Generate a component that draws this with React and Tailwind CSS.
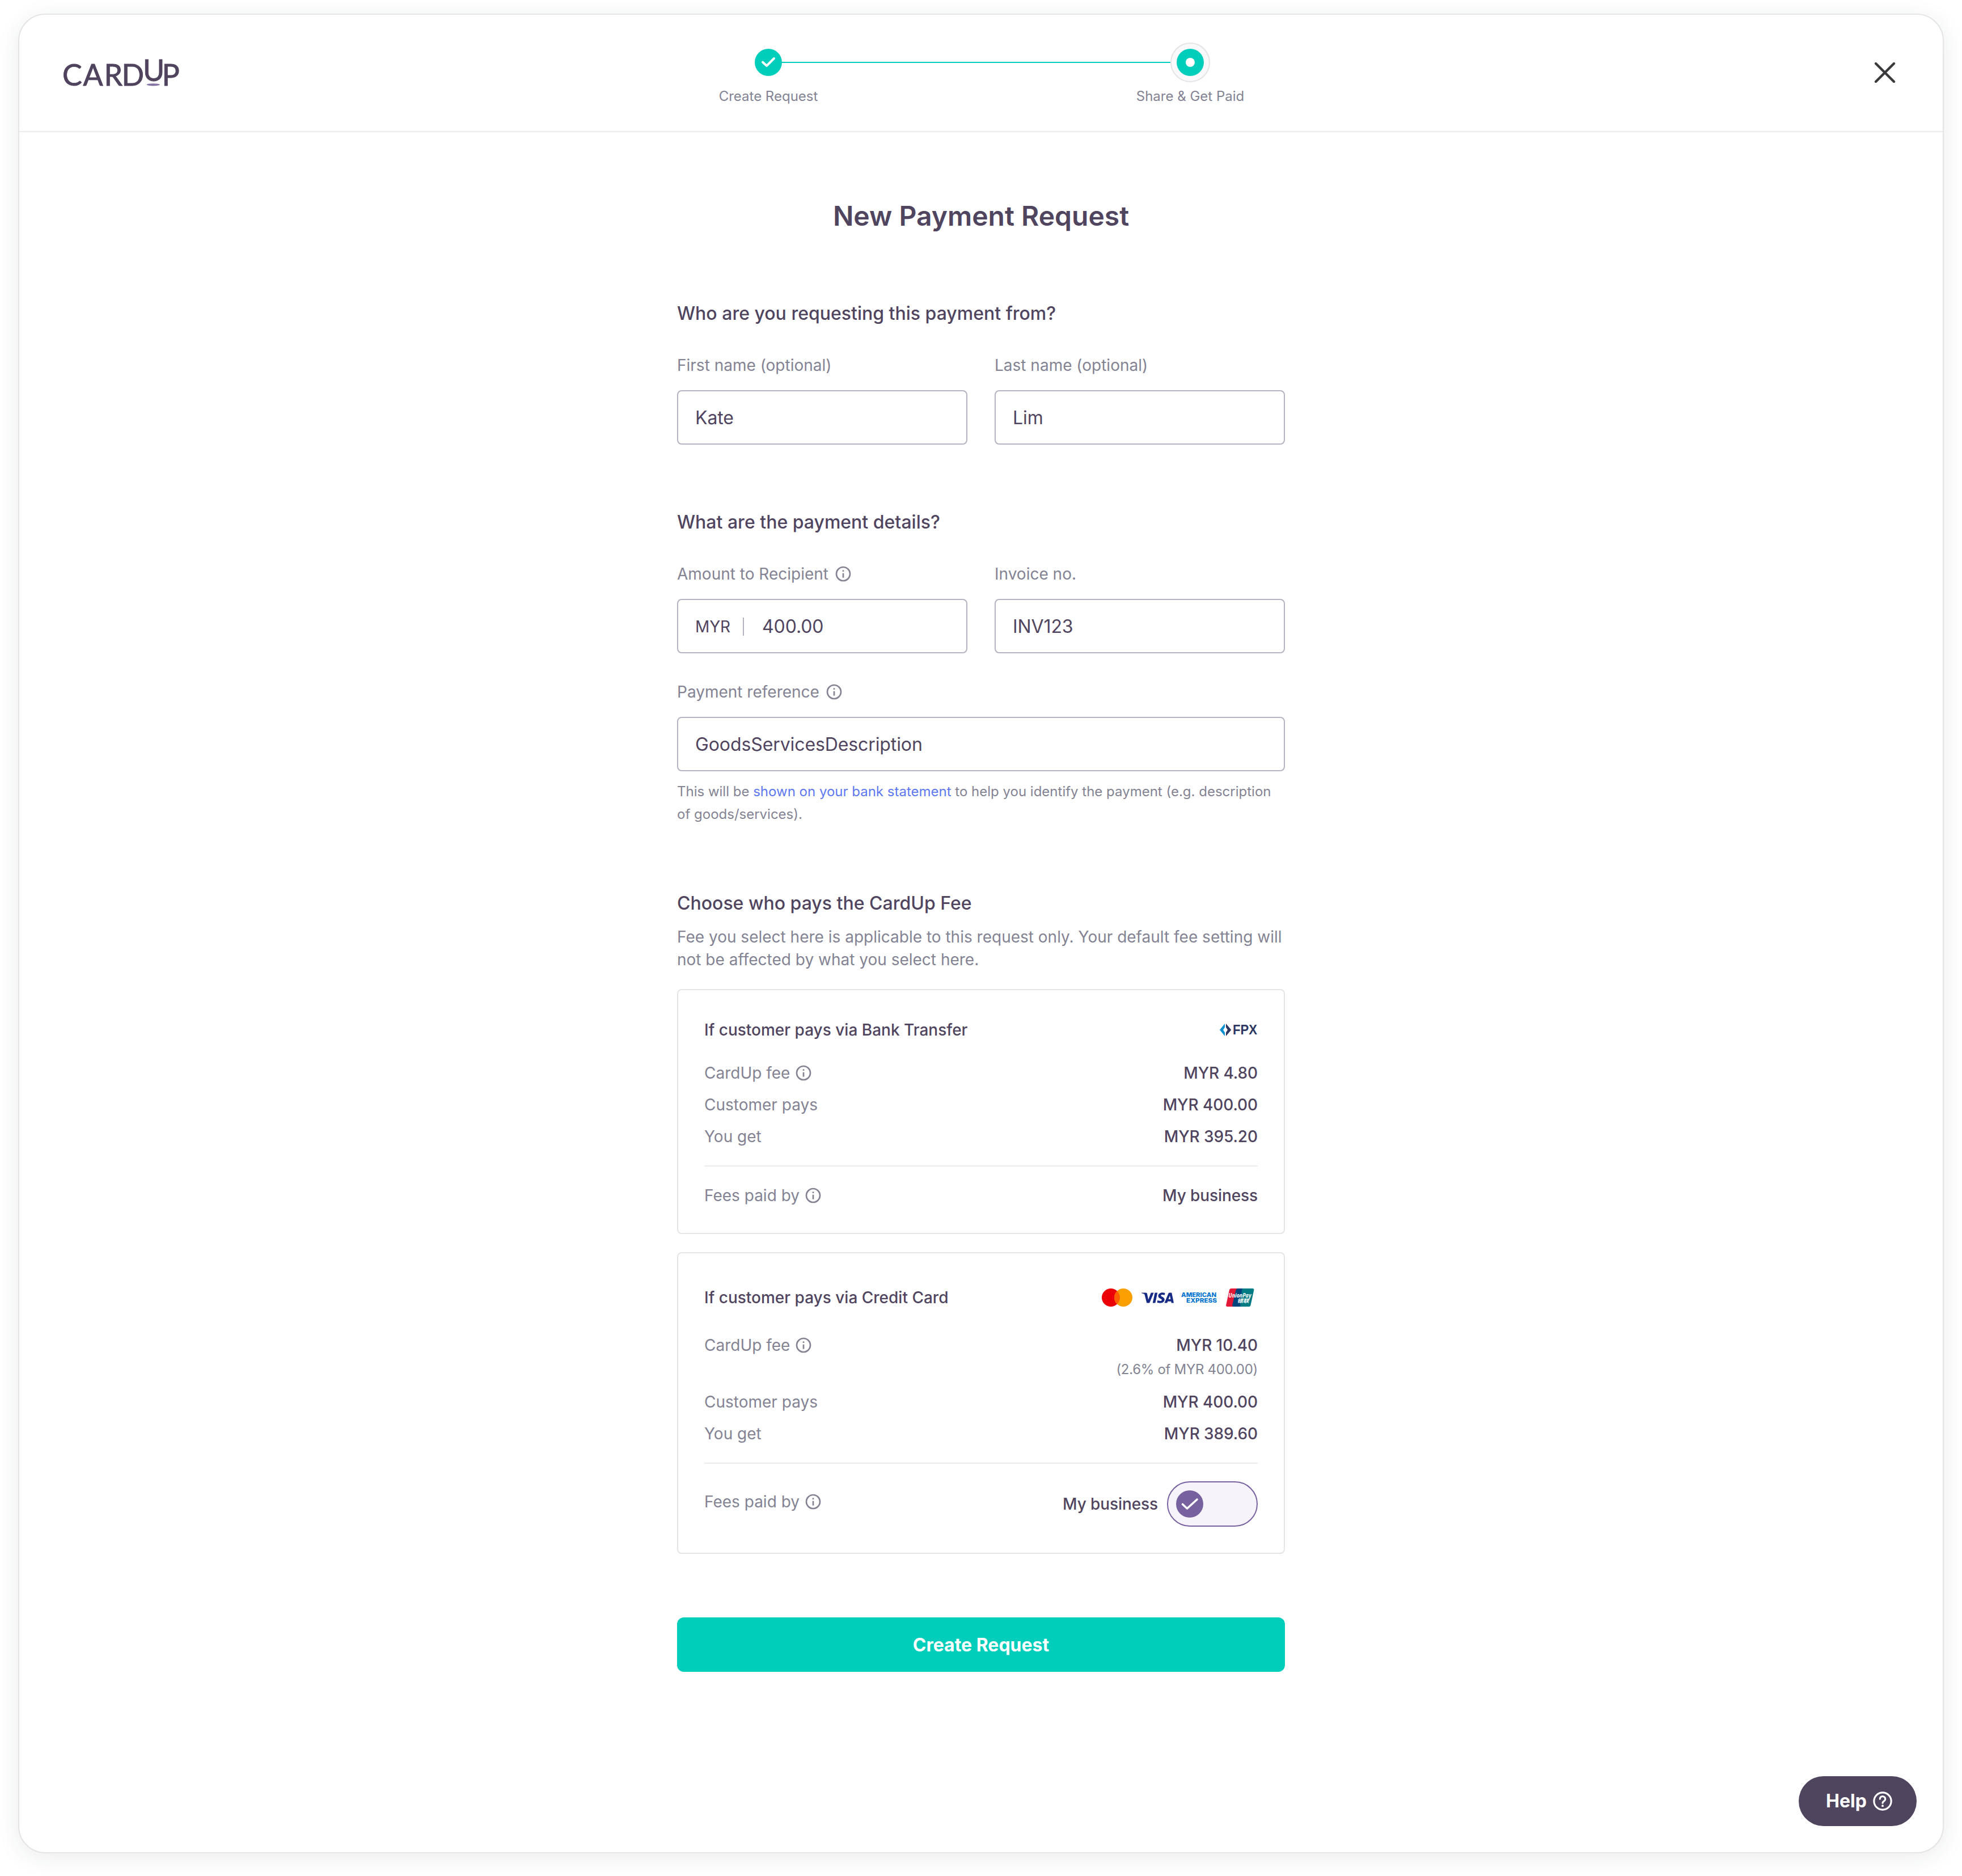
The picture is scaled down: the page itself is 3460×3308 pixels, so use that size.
import { SiVisa } from "react-icons/si";

const InfoIcon = () => (
  <svg viewBox="0 0 24 24" className="h-8 w-8 shrink-0" fill="none">
    <circle cx="12" cy="12" r="9" stroke="currentColor" strokeWidth="2" />
    <rect x="11" y="11" width="2" height="6" fill="currentColor" />
    <rect x="11" y="7" width="2" height="2" fill="currentColor" />
  </svg>
);

const Logo = () => (
  <svg viewBox="0 0 206 52" className="h-[52px] w-[206px] overflow-visible">
    <text
      x="-2 34.500 71.500 102.500 140 173.500"
      y="47.700 47.700 47.700 47.700 39.700 47.700"
      fontFamily="Lato"
      fontSize="52"
      fontWeight="400"
      fill="#4f435e"
      stroke="#4f435e"
      strokeWidth="0.9"
    >
      CARDUP
    </text>
    <ellipse cx="158.300" cy="46.300" rx="11.700" ry="2.100" fill="#8474a3" />
  </svg>
);

const FpxLogo = () => (
  <svg viewBox="0 0 68 24" className="h-6 w-[68px] overflow-visible">
    <path d="M10 1v6.500L7 12l3 4.500V23L1 12z" fill="#0a8fd0" />
    <path d="M12 1v6.500l3 4.500-3 4.500V23l9.300-11z" fill="#2c3863" />
    <text x="24" y="20" fontFamily="Liberation Sans" fontSize="23.500" fontWeight="700" fill="#2c3863" textLength="43" lengthAdjust="spacingAndGlyphs">
      FPX
    </text>
  </svg>
);

const Mastercard = () => (
  <svg viewBox="0 0 54 32" className="h-8 w-[54px]">
    <circle cx="16" cy="16" r="16" fill="#eb0007" />
    <circle cx="38" cy="16" r="16" fill="#f9a000" />
    <path d="M27 4.400a16 16 0 0 1 0 23.200 16 16 0 0 1 0-23.200z" fill="#ff5f00" />
  </svg>
);

const Amex = () => (
  <svg viewBox="0 0 64 20" className="h-5 w-16 overflow-visible" fontFamily="Inter" fontWeight="800" fill="#0073cf">
    <text x="0" y="9" fontSize="10.400" textLength="62" lengthAdjust="spacingAndGlyphs">
      AMERICAN
    </text>
    <text x="9" y="18.600" fontSize="10.400" textLength="54" lengthAdjust="spacingAndGlyphs">
      EXPRESS
    </text>
  </svg>
);

const UnionPay = () => (
  <svg viewBox="0 0 50 32" className="h-8 w-[50px] overflow-visible">
    <path d="M9 0h14l-7 32H2.500Q-.4 32 .2 29L6 2.500Q6.600 0 9 0z" fill="#e21836" />
    <path d="M21 0h14l-7 32H13.500q-2.900 0-2.300-3L17.600 2.500Q18.200 0 21 0z" fill="#00447c" />
    <path d="M30.500 0H47q3 0 2.300 3l-5.800 26.500q-.6 2.500-3 2.500H27.500q-2.900 0-2.300-3L28 2.500Q28.500 0 30.500 0z" fill="#007b84" />
    <text x="4.500" y="15.700" fontFamily="Open Sans" fontSize="10.500" fontWeight="700" fontStyle="italic" fill="#fff" textLength="40" lengthAdjust="spacingAndGlyphs">
      UnionPay
    </text>
    <text x="19.500" y="25" fontFamily="Noto Sans CJK SC, sans-serif" fontSize="9" fontWeight="700" fontStyle="italic" fill="#fff" textLength="21" lengthAdjust="spacingAndGlyphs">
      银联
    </text>
  </svg>
);

const Stepper = () => (
  <div className="flex flex-col items-center">
    <div className="flex h-[70px] items-center">
      <span className="flex h-12 w-12 items-center justify-center rounded-full bg-[#00cebb]">
        <svg viewBox="0 0 48 48" className="h-12 w-12" fill="none">
          <path d="M14 23.500l7 6.500 13-13" stroke="#fff" strokeWidth="4" strokeLinecap="round" strokeLinejoin="round" />
        </svg>
      </span>
      <span className="h-0.5 w-[685px] bg-[#00cebb]" />
      <span className="-mr-[11px] flex h-[70px] w-[70px] items-center justify-center rounded-full border-2 border-[#e4e4e4] bg-[#f9f9fc]">
        <span className="flex h-12 w-12 items-center justify-center rounded-full bg-[#00cebb]">
          <span className="h-4 w-4 rounded-full bg-white" />
        </span>
      </span>
    </div>
    <div className="mt-[5px] flex w-[944px] justify-between text-2xl leading-10 text-[#838393]">
      <span className="w-[200px] text-center">Create Request</span>
      <span className="w-[200px] text-center">Share &amp; Get Paid</span>
    </div>
  </div>
);

const Heading = ({ children }) => <h2 className="text-[32px] leading-[48px] font-medium">{children}</h2>;

const Field = ({ label, value, info, prefix }) => (
  <div className="flex flex-col gap-6">
    <div className="flex items-center gap-2.5 text-[28px] leading-10 text-[#838393]">
      {label}
      {info && <InfoIcon />}
    </div>
    <div className="flex h-24 items-center rounded-lg border-2 border-[#b5b3c0] px-[30px] pt-0.5 text-[32px] tracking-[-0.1px]">
      {prefix && <span className="mr-8 border-r-2 border-[#b5b3c0] pr-[22px] text-[28px] leading-8">{prefix}</span>}
      <span>{value}</span>
    </div>
  </div>
);

const Row = ({ label, info, value }) => (
  <div className="flex items-center justify-between">
    <span className="flex items-center gap-2 text-[#838393]">
      {label}
      {info && <InfoIcon />}
    </span>
    <span className="font-medium tracking-[-0.1px]">{value}</span>
  </div>
);

export default function App() {
  return (
    <div className="h-[3308px] w-[3460px] bg-white px-8 pt-6 pb-10 font-['Inter',sans-serif] text-[#50455f]">
      <div className="relative h-[3244px] rounded-[48px] border-2 border-[#e4e4e4] bg-white shadow-[0_8px_40px_rgba(30,45,60,0.09)]">
        <header className="grid h-[207px] grid-cols-[1fr_auto_1fr] items-start border-b-2 border-[#ebebeb] pr-[82px] pl-[78px]">
          <div className="pt-[77px]">
            <Logo />
          </div>
          <div className="-ml-0.5 pt-[49px]">
            <Stepper />
          </div>
          <svg viewBox="0 0 40 40" className="mt-[82px] h-10 w-10 justify-self-end" fill="none">
            <path d="M4 4l32 32M36 4L4 36" stroke="#3a393c" strokeWidth="4.400" strokeLinecap="round" />
          </svg>
        </header>

        <main className="mx-auto w-[1072px] pt-[116px]">
          <h1 className="text-center text-5xl leading-16 font-semibold">New Payment Request</h1>

          <section className="mt-[116px]">
            <Heading>Who are you requesting this payment from?</Heading>
            <div className="mt-[47px] grid grid-cols-2 gap-12">
              <Field label="First name (optional)" value="Kate" />
              <Field label="Last name (optional)" value="Lim" />
            </div>
          </section>

          <section className="mt-[113px]">
            <Heading>What are the payment details?</Heading>
            <div className="mt-[47px] mb-12 grid grid-cols-2 gap-12">
              <Field label="Amount to Recipient" info prefix="MYR" value="400.00" />
              <Field label="Invoice no." value="INV123" />
            </div>
            <Field label="Payment reference" info value="GoodsServicesDescription" />
            <p className="mt-4 text-2xl leading-10 text-[#838393]">
              This will be <a className="text-[#5d78f0]">shown on your bank statement</a> to help you identify the payment (e.g. description
              <br />
              of goods/services).
            </p>
          </section>

          <section className="mt-[113px]">
            <Heading>Choose who pays the CardUp Fee</Heading>
            <p className="mt-[15px] text-[28px] leading-10 text-[#838393]">
              Fee you select here is applicable to this request only. Your default fee setting will
              <br />
              not be affected by what you select here.
            </p>

            <div className="mt-8 rounded-lg border-2 border-[#e4e4e4] px-[46px] pt-[50px] pb-[46px] text-[28px] leading-10">
              <div className="flex items-center justify-between">
                <h3 className="font-medium">If customer pays via Bank Transfer</h3>
                <FpxLogo />
              </div>
              <div className="mt-9 flex flex-col gap-4">
                <Row label="CardUp fee" info value="MYR 4.80" />
                <Row label="Customer pays" value="MYR 400.00" />
                <Row label="You get" value="MYR 395.20" />
              </div>
              <div className="my-[31px] h-0.5 bg-[#ebebeb]" />
              <Row label="Fees paid by" info value="My business" />
            </div>

            <div className="mt-8 rounded-lg border-2 border-[#e4e4e4] px-[46px] pt-[58px] pb-[46px] text-[28px] leading-10">
              <div className="flex items-center justify-between">
                <h3 className="font-medium">If customer pays via Credit Card</h3>
                <div className="flex items-center pr-1.5">
                  <Mastercard />
                  <SiVisa className="-my-3 mr-[13px] ml-4 h-[57px] w-[57px] text-[#172b85]" />
                  <Amex />
                  <span className="w-[15px]" />
                  <UnionPay />
                </div>
              </div>
              <div className="mt-11 flex flex-col gap-4">
                <div>
                  <Row label="CardUp fee" info value="MYR 10.40" />
                  <p className="mt-px -mb-px text-right text-2xl leading-11 tracking-[-0.3px] text-[#838393]">(2.6% of MYR 400.00)</p>
                </div>
                <Row label="Customer pays" value="MYR 400.00" />
                <Row label="You get" value="MYR 389.60" />
              </div>
              <div className="my-[31px] h-0.5 bg-[#ebebeb]" />
              <div className="flex items-center justify-between">
                <span className="mb-2 flex items-center gap-2 text-[#838393]">
                  Fees paid by
                  <InfoIcon />
                </span>
                <span className="flex items-center gap-4">
                  <span className="font-medium tracking-[-0.1px]">My business</span>
                  <span className="flex h-20 w-40 items-center rounded-full border-2 border-[#77619f] bg-[#f6f3fb] px-3.5">
                    <svg viewBox="0 0 48 48" className="h-12 w-12" fill="none">
                      <circle cx="24" cy="24" r="24" fill="#77619f" />
                      <path d="M11.500 24.500l8 7.500L37 16" stroke="#fff" strokeWidth="3.600" strokeLinecap="round" strokeLinejoin="round" />
                    </svg>
                  </span>
                </span>
              </div>
            </div>
          </section>

          <button className="mt-28 h-24 w-full rounded-xl bg-[#00cebb] pt-0.5 text-[32px] font-bold text-white">Create Request</button>
        </main>

        <button className="absolute right-[46px] bottom-[46px] flex h-[88px] w-[208px] items-center rounded-full bg-[#50455f] pl-12 text-[32px] font-bold text-white">
          Help
          <svg viewBox="0 0 24 24" className="ml-2 h-10 w-10" fill="none" stroke="currentColor" strokeLinecap="round">
            <circle cx="12" cy="12" r="9.100" strokeWidth="1.900" />
            <path d="M9.200 9.700a2.800 2.700 0 1 1 4.300 2.200c-.9.600-1.500 1-1.500 2.100" strokeWidth="1.900" />
            <circle cx="12" cy="17" r="1.200" fill="currentColor" stroke="none" />
          </svg>
        </button>
      </div>
    </div>
  );
}
